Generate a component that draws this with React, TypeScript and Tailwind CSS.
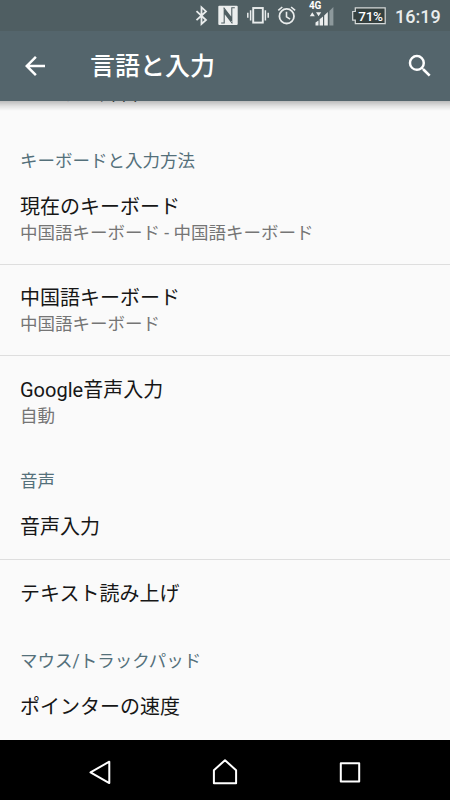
import { type ReactNode } from "react";

type Item = {
  title: string;
  summary?: string;
};

type SectionProps = {
  title: string;
  className: string;
  children: ReactNode;
};

const StatusBar = () => (
  <div className="relative h-[31px] shrink-0 bg-[#4f5e62] text-white">
    <svg className="block h-[31px] w-[450px]" viewBox="0 0 450 31" fill="none">
      {/* Bluetooth */}
      <path d="M196.5 11.2L206 20l-4.5 4V7.2l4.5 4.2-9.5 8.8" stroke="#e9ecec" strokeWidth="1.8" />
      {/* NFC */}
      <rect x="218.3" y="5.8" width="19.4" height="19.2" rx="1" fill="#eceeee" />
      <path d="M221.2 23h3V10.5l6.6 10V17L223.6 7.6M234.8 7.8h-3v12.7l-6.6-10v3.5l7.2 9.4" stroke="#4f5e62" strokeWidth="1.1" />
      {/* Vibración */}
      <rect x="253.2" y="8" width="9.6" height="14.6" stroke="#e9ecec" strokeWidth="1.9" />
      <path d="M250.6 10.2v10.2M265.4 10.2v10.2M247.8 12.8v5M268.2 12.8v5" stroke="#e9ecec" strokeWidth="1.5" />
      {/* Alarma */}
      <circle cx="286.7" cy="16.2" r="7.3" stroke="#e9ecec" strokeWidth="1.8" />
      <path d="M286.5 11.8v5l3.6 2.4M278.3 10.4l4-3.4M295.1 10.4l-4-3.4" stroke="#e9ecec" strokeWidth="1.6" />
      {/* Señal */}
      <path d="M309.8 16.2l2.5-4 2.5 4zM316 12.2h5.2l-2.6 4z" fill="#eceeee" />
      <path d="M315.5 25.5v-3l3-2v5zM319.6 25.5v-6.3l3.4-2.7v9zM324.2 25.5v-10l3.6-3.5v13.5z" fill="#eceeee" />
      <path d="M329.4 25.5V11l4-4v18.5z" fill="#8d999c" />
      {/* Batería */}
      <path d="M355.3 7.8h29.9v15.9h-29.9v-3.5h-2.6v-8.7h2.6z" fill="#35403f" stroke="#d6dada" strokeWidth="1.2" />
    </svg>
    <span className="absolute left-[309px] top-0 text-[10px] leading-[12px] font-bold tracking-[-0.3px]">4G</span>
    <span className="absolute left-[357px] top-[9px] w-[27px] text-center text-[13.5px] leading-[14px] font-medium tracking-[-0.3px]">71%</span>
    <span className="absolute left-[395px] top-[6px] text-[18px] leading-[21px] font-medium text-[#e9ecec]">16:19</span>
  </div>
);

const AppBar = () => (
  <header className="relative z-10 flex h-[70px] shrink-0 items-center bg-[#54656c] pr-[15px] pl-[20px] text-white">
    <svg className="size-[30px]" viewBox="0 0 24 24" fill="currentColor">
      <path d="M20 11H7.83l5.59-5.59L12 4l-8 8 8 8 1.41-1.41L7.83 13H20v-2z" />
    </svg>
    <h1 className="ml-[40px] flex-1 pt-[2px] text-[25px] leading-[30px] font-medium">言語と入力</h1>
    <svg className="size-[30px]" viewBox="0 0 24 24" fill="currentColor">
      <path d="M15.5 14h-.79l-.28-.27A6.471 6.471 0 0 0 16 9.5 6.5 6.5 0 1 0 9.5 16c1.61 0 3.09-.59 4.23-1.57l.27.28v.79l5 4.99L20.49 19l-4.99-5zm-6 0C7.01 14 5 11.99 5 9.5S7.01 5 9.5 5 14 7.01 14 9.5 11.99 14 9.5 14z" />
    </svg>
    {/* Sombra sobre el contenido */}
    <div className="absolute inset-x-0 top-full h-[10px] bg-linear-to-b from-black/25 via-black/10 to-transparent" />
  </header>
);

const Section = ({ title, className, children }: SectionProps) => (
  <section className={className}>
    <h2 className="px-5 text-[17.5px] leading-[22px] text-[#54707a]">{title}</h2>
    {children}
  </section>
);

const Row = ({ title, summary }: Item) => (
  <div className="px-5">
    <p className="text-[20px] leading-[26px] text-[#161616]">{title}</p>
    {summary && <p className="mt-[2px] text-[17.5px] leading-[22px] text-[#757575]">{summary}</p>}
  </div>
);

const Divider = () => <div className="h-px bg-[#dedede]" />;

const NavBar = () => (
  <nav className="flex h-[60px] shrink-0 items-center justify-between bg-black px-[85px] pt-[3px]">
    <svg className="size-[30px]" viewBox="0 0 30 30" fill="none" stroke="white" strokeWidth="2" strokeLinejoin="round">
      <path d="M24.3 4.7v21.4L5.5 15.4z" />
    </svg>
    <svg className="size-[30px]" viewBox="0 0 30 30" fill="none" stroke="white" strokeWidth="2" strokeLinejoin="round">
      <path d="M15 3.2l11.1 10v13H3.9v-13z" />
    </svg>
    <svg className="size-[30px]" viewBox="0 0 30 30" fill="none" stroke="white" strokeWidth="2" strokeLinejoin="round">
      <path d="M5.8 6.2h18.4v18.2H5.8z" />
    </svg>
  </nav>
);

const App = () => {
  return (
    <div className="flex h-[800px] w-[450px] flex-col overflow-hidden bg-[#fafafa] font-[Roboto,'Noto_Sans_CJK_JP',sans-serif]">
      <StatusBar />
      <AppBar />

      {/* Lista desplazada: la primera fila queda bajo la barra */}
      <main className="min-h-0 flex-1 overflow-hidden">
        <div className="-mt-[21px]">
          <Row title="ユーザー辞書" />
        </div>

        <Section title="キーボードと入力方法" className="pt-[44px]">
          <div className="pt-[22px] pb-[20px]">
            <Row title="現在のキーボード" summary="中国語キーボード - 中国語キーボード" />
          </div>
          <Divider />
          <div className="pt-[20px] pb-[20px]">
            <Row title="中国語キーボード" summary="中国語キーボード" />
          </div>
          <Divider />
          <div className="pt-[21px] pb-[21px]">
            <Row title="Google音声入力" summary="自動" />
          </div>
        </Section>

        <Section title="音声" className="pt-[22px]">
          <div className="pt-[22px] pb-[19px]">
            <Row title="音声入力" />
          </div>
          <Divider />
          <div className="pt-[21px]">
            <Row title="テキスト読み上げ" />
          </div>
        </Section>

        <Section title="マウス/トラックパッド" className="pt-[43px]">
          <div className="pt-[22px]">
            <Row title="ポインターの速度" />
          </div>
        </Section>
      </main>

      <NavBar />
    </div>
  );
};

export default App;
